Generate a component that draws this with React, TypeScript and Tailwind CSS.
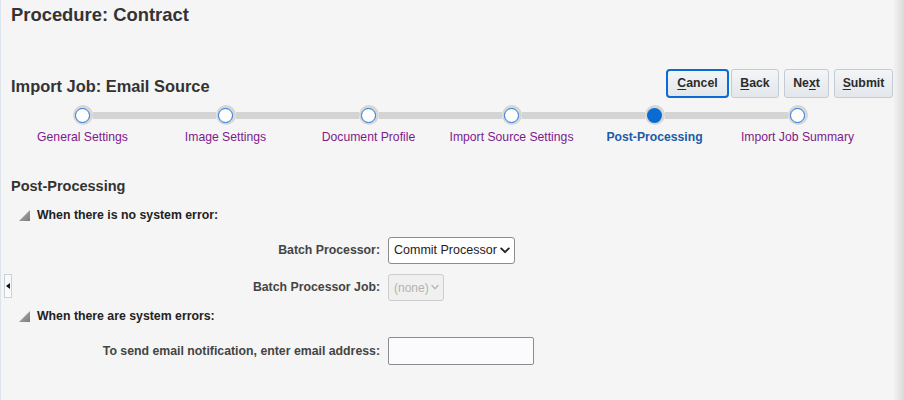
const steps = [
    "General Settings",
    "Image Settings",
    "Document Profile",
    "Import Source Settings",
    "Post-Processing",
    "Import Job Summary",
];

const ACTIVE = 4;

function Chevron({ color, small }: { color: string; small?: boolean }) {
    return (
        <svg
            width={small ? 8 : 10}
            height="7"
            viewBox={small ? "0 0 8 7" : "0 0 10 7"}
            className="pointer-events-none absolute right-[5px] top-[10px]"
        >
            <path
                d={small ? "M1 1.6 L4 4.8 L7 1.6" : "M1.2 1.4 L5 5.2 L8.8 1.4"}
                fill="none"
                stroke={color}
                strokeWidth={small ? 1.4 : 1.9}
                strokeLinecap="round"
                strokeLinejoin="round"
            />
        </svg>
    );
}

function Disclosure() {
    return (
        <svg width="11" height="11" viewBox="0 0 11 11">
            <defs>
                <linearGradient id="tri" x1="0" y1="0" x2="1" y2="1">
                    <stop offset="0" stopColor="#b4b4b4" />
                    <stop offset="1" stopColor="#7c7c7c" />
                </linearGradient>
            </defs>
            <polygon points="11,0 11,11 0,11" fill="url(#tri)" />
        </svg>
    );
}

function Btn({ label, mnemonic, width, focused }: { label: string; mnemonic: number; width: string; focused?: boolean }) {
    return (
        <button
            className={
                "h-[29px] text-[12.3px] font-bold text-[#2b2b2b] bg-[linear-gradient(#f3f5f7,#e3e7eb)] " +
                width +
                (focused ? " rounded-[4px] border-2 border-[#0a6ad6]" : " rounded-[3px] border border-[#c3ccd5]")
            }
        >
            {label.slice(0, mnemonic)}
            <span className="underline underline-offset-2">{label[mnemonic]}</span>
            {label.slice(mnemonic + 1)}
        </button>
    );
}

function Step({ text, index }: { text: string; index: number }) {
    const active = index === ACTIVE;
    return (
        <div className="flex w-[143px] flex-col items-center">
            <div className="flex h-[20px] w-full items-center">
                <div className={"h-[7px] flex-1 " + (index === 0 ? "" : "bg-[#d4d4d4]")} />
                <div className="flex h-[20px] w-[20px] items-center justify-center rounded-full bg-[#d6d6d6]">
                    {active ? (
                        <div className="h-[15px] w-[15px] rounded-full bg-[#0a6bd3]" />
                    ) : (
                        <div className="h-[15px] w-[15px] rounded-full border-[1.5px] border-[#1f74d8] bg-white" />
                    )}
                </div>
                <div className={"h-[7px] flex-1 " + (index === steps.length - 1 ? "" : "bg-[#d4d4d4]")} />
            </div>
            <p
                className={
                    "mt-[4px] whitespace-nowrap text-[12.2px] leading-[16px] " +
                    (active ? "font-bold text-[#1c5ca8]" : "text-[#7e1a8c]")
                }
            >
                {text}
            </p>
        </div>
    );
}

export default function App() {
    return (
        <div className="flex h-[400px] w-[904px] overflow-hidden bg-[#f5f5f5] font-['Liberation_Sans',Arial,sans-serif] text-[#333]">
            <div className="relative flex-1 border-l border-[#dce3ea]">
                <div className="pl-[10px] pt-[4px]">
                    <h1 className="text-[18.4px] font-bold leading-[22px] text-[#333]">{"Procedure: Contract"}</h1>
                </div>

                <div className="mt-[43px] flex items-start justify-between pl-[10px]">
                    <h2 className="mt-[7px] text-[16.4px] font-bold leading-[20px] text-[#333]">
                        {"Import Job: Email Source"}
                    </h2>
                    <div className="flex">
                        <Btn label="Cancel" mnemonic={0} width="w-[63px]" focused />
                        <div className="ml-[2px]">
                            <Btn label="Back" mnemonic={0} width="w-[48px]" />
                        </div>
                        <div className="ml-[5px]">
                            <Btn label="Next" mnemonic={2} width="w-[45px]" />
                        </div>
                        <div className="ml-[5px]">
                            <Btn label="Submit" mnemonic={0} width="w-[59px]" />
                        </div>
                    </div>
                </div>

                <div className="mt-[7px] flex pl-[10px]">
                    {steps.map((s, i) => (
                        <Step key={s} text={s} index={i} />
                    ))}
                </div>

                <h3 className="mt-[32px] pl-[10px] text-[14.5px] font-bold leading-[18px] text-[#333]">
                    {"Post-Processing"}
                </h3>

                <div className="mt-[12px] flex items-center gap-[7px] pl-[18px]">
                    <Disclosure />
                    <p className="text-[12.3px] font-bold leading-[16px] text-[#222]">{"When there is no system error:"}</p>
                </div>

                <div className="mt-[14px] flex items-center">
                    <label className="w-[379px] text-right text-[12.3px] font-bold text-[#444]">{"Batch Processor:"}</label>
                    <div className="relative ml-[8px] h-[27px] w-[127px]">
                        <select className="h-full w-full appearance-none rounded-[3px] border border-[#8c8c8c] bg-white pl-[5px] text-[12.5px] text-[#222]">
                            <option>{"Commit Processor"}</option>
                        </select>
                        <Chevron color="#222" />
                    </div>
                </div>

                <div className="mt-[10px] flex items-center">
                    <label className="w-[379px] text-right text-[12.3px] font-bold text-[#444]">{"Batch Processor Job:"}</label>
                    <div className="relative ml-[8px] h-[27px] w-[56px]">
                        <select
                            disabled
                            className="h-full w-full appearance-none rounded-[3px] border border-[#cdcdcd] bg-[#f0f0f0] pl-[5px] text-[12px] text-[#b3b3b3]"
                        >
                            <option>{"(none)"}</option>
                        </select>
                        <Chevron color="#b8b8b8" small />
                    </div>
                </div>

                <div className="mt-[7px] flex items-center gap-[7px] pl-[18px]">
                    <Disclosure />
                    <p className="text-[12.3px] font-bold leading-[16px] text-[#222]">{"When there are system errors:"}</p>
                </div>

                <div className="mt-[13px] flex items-center">
                    <label className="w-[379px] text-right text-[12.3px] font-bold text-[#444]">
                        {"To send email notification, enter email address:"}
                    </label>
                    <input className="ml-[8px] h-[28px] w-[146px] rounded-[2px] border border-[#8c8c8c] bg-[#fbfbfd]" />
                </div>

                <div className="absolute left-[3px] top-[274px] flex h-[24px] w-[8px] items-center justify-center border border-[#c7d1dc] bg-[#fafafa]">
                    <svg width="4" height="6" viewBox="0 0 4 6">
                        <polygon points="4,0 4,6 0,3" fill="#111" />
                    </svg>
                </div>
            </div>
            <div className="w-[11px] bg-[linear-gradient(to_right,#f4f4f4,#dadada)]" />
        </div>
    );
}
